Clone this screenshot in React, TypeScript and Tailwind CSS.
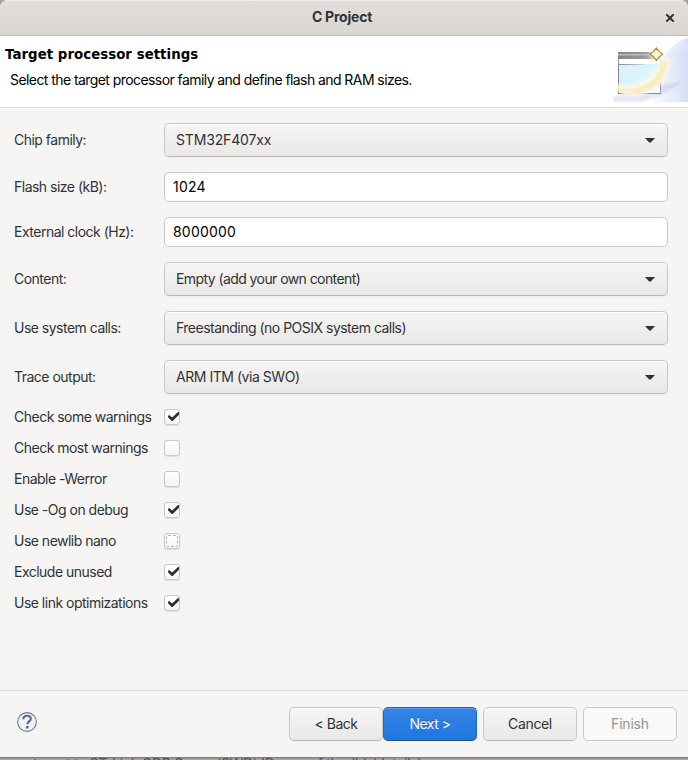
import { useState } from "react";

const BORDER = "border-[#cdc7c2]";

function Dropdown({ value, tracking = "" }: { value: string; tracking?: string }) {
  return (
    <button
      className={`flex h-[34px] w-[504px] items-center justify-between rounded-[5px] border ${BORDER} border-b-[#bfb8b1] bg-linear-to-b from-[#f6f5f3] to-[#eae8e6] pl-[11px] pr-3 text-left shadow-[inset_0_1px_#ffffff,0_1px_1px_rgba(0,0,0,0.04)]`}
    >
      <span className={tracking}>{value}</span>
      <svg width="10" height="5" viewBox="0 0 10 5" className="mt-px">
        <path d="M0 0h10L5.8 4.6H4.2Z" fill="#2e3436" />
      </svg>
    </button>
  );
}

function TextField({ value }: { value: string }) {
  return (
    <input
      readOnly
      value={value}
      className={`block h-[30px] w-[504px] rounded-[5px] border ${BORDER} bg-white px-2 pb-px text-black tracking-[0.2px] outline-none`}
    />
  );
}

function Row({ label, children, className = "" }: { label: React.ReactNode; children: React.ReactNode; className?: string }) {
  return (
    <div className={`flex items-center ${className}`}>
      <div className="w-[150px] shrink-0 whitespace-nowrap">{label}</div>
      {children}
    </div>
  );
}

function Check({ label, initial, focused }: { label: string; initial: boolean; focused?: boolean }) {
  const [on, setOn] = useState(initial);
  return (
    <Row label={label} className="h-[31px]">
      <button
        role="checkbox"
        aria-checked={on}
        aria-label={label}
        onClick={() => setOn(!on)}
        className={`flex size-4 items-center justify-center rounded-[3px] border ${BORDER} bg-linear-to-b from-white to-[#f6f5f4] shadow-[0_1px_1px_rgba(0,0,0,0.09)]`}
      >
        {focused && <span className="size-3 rounded-[2px] border border-dashed border-[#b9b9b8]" />}
        {on && (
          <svg width="14" height="14" viewBox="0 0 14 14" className="shrink-0">
            <path d="M3 6l1.2-1L7.2 7.6 13 2h1v2.7L7.7 11h-1L3 7.3Z" fill="#2b3032" />
          </svg>
        )}
      </button>
    </Row>
  );
}

function BannerArt() {
  return (
    <svg width="75" height="66" viewBox="0 0 75 66" className="mt-px">
      <defs>
        <linearGradient id="sky" x1="0" x2="1" y1="0.3" y2="0">
          <stop offset="0" stopColor="#fff" />
          <stop offset="0.55" stopColor="#edf1fb" />
          <stop offset="1" stopColor="#d8e1f5" />
        </linearGradient>
        <linearGradient id="beam" x1="0" x2="1">
          <stop offset="0" stopColor="#f6f9ff" />
          <stop offset="1" stopColor="#cfdaf3" />
        </linearGradient>
        <linearGradient id="bar">
          <stop offset="0" stopColor="#858585" />
          <stop offset="0.6" stopColor="#989898" />
          <stop offset="1" stopColor="#d2d2d2" />
        </linearGradient>
        <linearGradient id="rule">
          <stop offset="0" stopColor="#888" />
          <stop offset="1" stopColor="#c9dbe4" />
        </linearGradient>
        <linearGradient id="pane" x1="0" x2="1" y1="0" y2="1">
          <stop offset="0" stopColor="#d9effe" />
          <stop offset="0.45" stopColor="#dcf4fe" />
          <stop offset="1" stopColor="#fafdff" />
        </linearGradient>
        <filter id="soft" x="-20%" y="-20%" width="140%" height="140%">
          <feGaussianBlur stdDeviation="0.8" />
        </filter>
      </defs>
      <path d="M35 65C42 29 51 8 75 1V65Z" fill="url(#sky)" />
      <path d="M48 22Q60 10 75 14V65H40Z" fill="url(#beam)" opacity=".7" />
      <path d="M0 60l18-5 51-11-7 6-14 8-20 7H0Z" fill="#8f94bd" opacity=".22" filter="url(#soft)" />
      <rect x="5.5" y="15.5" width="42" height="41" fill="#fff" stroke="#9a9a9a" />
      <rect x="5" y="15" width="43" height="7" fill="url(#bar)" />
      <rect x="5" y="17" width="34" height="1.5" fill="#bcbcbc" />
      <rect x="6" y="27" width="41" height="29" fill="url(#pane)" />
      <rect x="6" y="27" width="26" height="1" fill="url(#rule)" />
      <path d="M5.5 28V57" stroke="#888" />
      <path d="M5 56.5H48" stroke="#8c8c8c" />
      <path d="M2 47C24 53 44 43 46.5 24C48 18 57 19 57 27C54 47 38 58 20 59Q8 58 2 51Z" fill="#fffbe8" opacity=".9" filter="url(#soft)" />
      <path d="M4 50C26 55 45 44 48.5 25C49 21 55 22 55 27C51 46 38 56 21 57Q9 56 4 52Z" fill="#f9eec4" filter="url(#soft)" />
      <path d="M25 54Q45 48 51 28" fill="none" stroke="#f2dc90" strokeWidth="1.4" strokeDasharray="1.5 3" opacity=".5" />
      <circle cx="43.3" cy="17" r="7" fill="#fffbe6" opacity=".55" filter="url(#soft)" />
      <path d="M43.3 11L46 14.4 49.6 17.2 46 20 43.3 23.5 40.5 20 37 17.2 40.5 14.4Z" fill="#fffdf5" stroke="#b88d35" strokeWidth="1.3" />
      <path d="M43.3 14L46.5 17.2 43.3 20.5 40 17.2Z" fill="#fff8df" stroke="#ead6a4" strokeWidth=".6" />
    </svg>
  );
}

const BTN = "h-[34px] w-[94px] rounded-[5px] border text-center";
const NORMAL = `${BORDER} border-b-[#bfb8b1] bg-linear-to-b from-[#f6f5f3] to-[#eae8e6] shadow-[inset_0_1px_#ffffff,0_1px_1px_rgba(0,0,0,0.04)]`;

const CHECKS: [string, boolean, boolean?][] = [
  ["Check some warnings", true],
  ["Check most warnings", false],
  ["Enable -Werror", false],
  ["Use -Og on debug", true],
  ["Use newlib nano", false, true],
  ["Exclude unused", true],
  ["Use link optimizations", true],
];

export default function App() {
  return (
    <div className="flex h-[760px] w-[688px] flex-col overflow-hidden bg-[#a3a3a3] font-['Inter',sans-serif] text-[14px] leading-[22px] tracking-[-0.51px] text-[#2e3436]">
      <div className="flex h-[757px] shrink-0 flex-col overflow-hidden rounded-t-[8px] bg-[#f6f5f4]">
        <header className="flex h-9 shrink-0 items-center border-b border-[#bfb8b1] bg-linear-to-b from-[#e1dedb] to-[#dad6d2] shadow-[inset_0_1px_#efedeb]">
          <div className="w-8" />
          <h1 className="flex-1 pb-px text-center font-bold tracking-[-0.22px]">C Project</h1>
          <button aria-label="Close" className="flex w-9 justify-center">
            <svg width="8" height="8" viewBox="0 0 8 8">
              <path d="M1 1L7 7M7 1L1 7" stroke="#2e3436" strokeWidth="2" strokeLinecap="square" />
            </svg>
          </button>
        </header>

        <section className="flex h-[72px] shrink-0 justify-between border-b border-[#dcdcdc] bg-white text-black">
          <div className="pl-[5px] pt-[9px]">
            <h2 className="font-['DejaVu_Sans',sans-serif] text-[13.33px] font-bold leading-5 tracking-[0.04px]">
              Target processor settings
            </h2>
            <p className="pl-[5px] pt-[5px] leading-5 tracking-[-0.57px]">
              Select the target processor family and define flash and RAM sizes.
            </p>
          </div>
          <BannerArt />
        </section>

        <main className="flex-1 pl-[14px] pt-[15px]">
          <div className="flex flex-col gap-[15px]">
            <Row label="Chip family:"><Dropdown value="STM32F407xx" tracking="tracking-[-0.15px]" /></Row>
            <Row label="Flash size (kB):"><TextField value="1024" /></Row>
            <Row label="External clock (Hz):"><TextField value="8000000" /></Row>
            <Row label="Content:"><Dropdown value="Empty (add your own content)" tracking="tracking-[-0.58px]" /></Row>
            <Row label="Use system calls:"><Dropdown value="Freestanding (no POSIX system calls)" /></Row>
            <Row label="Trace output:"><Dropdown value="ARM ITM (via SWO)" tracking="tracking-[-0.46px]" /></Row>
          </div>
          <div className="pt-[7px]">
            {CHECKS.map(([label, on, focused]) => (
              <Check key={label} label={label} initial={on} focused={focused} />
            ))}
          </div>
        </main>

        <footer className="flex h-[67px] shrink-0 items-start justify-between border-t border-[#dadad9] pl-4 pr-[11px] pt-4">
          <button aria-label="Help" className="mt-[4px]">
            <svg width="22" height="22" viewBox="0 0 22 22">
              <circle cx="11" cy="11" r="9.4" fill="#f1f2f4" stroke="#6b7a98" strokeWidth="1.1" />
              <path d="M7.3 8.3C7.4 5.4 9 4.7 11 4.7s3.9 1 3.9 3.1c0 2.7-3.5 2.6-3.5 5.4" fill="none" stroke="#566789" strokeWidth="2.1" />
              <rect x="10" y="15" width="2.6" height="2.4" rx=".6" fill="#566789" />
            </svg>
          </button>
          <div className="flex gap-[6px]">
            <div className="flex">
              <button className={`${BTN} ${NORMAL}`}>&lt; Back</button>
              <button className={`${BTN} border-[#1b6acb] border-b-[#15539e] bg-linear-to-b from-[#3584e4] to-[#1f76e1] text-white shadow-[inset_0_1px_#5c9cea] [text-shadow:0_-1px_rgba(0,0,0,0.25)]`}>
                Next &gt;
              </button>
            </div>
            <button className={`${BTN} ${NORMAL} tracking-[-0.35px]`}>Cancel</button>
            <button disabled className={`${BTN} ${BORDER} bg-[#faf9f8] text-[#929595] tracking-[-0.2px]`}>Finish</button>
          </div>
        </footer>
      </div>
      <div className="h-[3px] overflow-hidden border-t border-[#7d7d7d] bg-linear-to-b from-[#979797] to-[#aaaaaa] pl-[33px] leading-4 text-[#555]">
        <div className="-mt-[2px] whitespace-nowrap tracking-[-0.3px]">target to ST-Link GDB Server(SWD) ID map of the (b) (details)</div>
      </div>
    </div>
  );
}
